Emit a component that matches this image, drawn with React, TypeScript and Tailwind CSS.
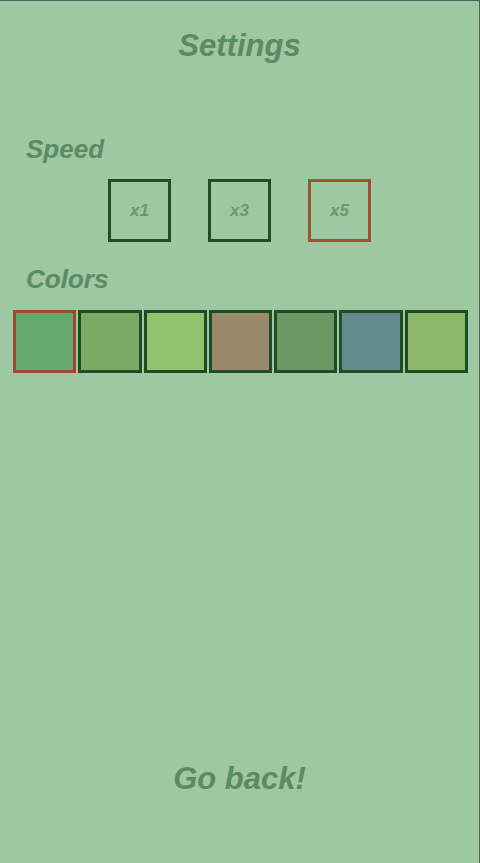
const speeds = [
  { label: "x1", active: false },
  { label: "x3", active: false },
  { label: "x5", active: true },
];

const swatches = [
  { color: "bg-[#66a96f]", active: true },
  { color: "bg-[#7aab66]", active: false },
  { color: "bg-[#8ec46e]", active: false },
  { color: "bg-[#988a6a]", active: false },
  { color: "bg-[#6a9764]", active: false },
  { color: "bg-[#608c8e]", active: false },
  { color: "bg-[#8db86a]", active: false },
];

export default function App() {
  return (
    <div className="min-h-screen w-full bg-[#9dc8a1] border-t border-r border-[#4f6153] flex flex-col font-['Liberation_Sans',Arial,sans-serif] italic font-bold text-[#5b8b61]">
      <h1 className="text-[31px] leading-none text-center mt-[29px]">Settings</h1>

      <h2 className="text-[26px] leading-none pl-[26px] mt-[75px]">Speed</h2>
      <div className="flex gap-[37px] pl-[108px] mt-[17px]">
        {speeds.map((s) => (
          <div
            key={s.label}
            className={
              "w-[63px] h-[63px] border-[3px] flex items-center justify-center text-[17px] text-[#6c9870] " +
              (s.active ? "border-[#9b5233]" : "border-[#1f4d25]")
            }
          >
            {s.label}
          </div>
        ))}
      </div>

      <h2 className="text-[26px] leading-none pl-[26px] mt-[24px]">Colors</h2>
      <div className="flex gap-[2px] pl-[13px] pr-[11px] mt-[18px]">
        {swatches.map((s, i) => (
          <div
            key={i}
            className={
              "flex-1 h-[63px] border-[3px] " +
              s.color +
              " " +
              (s.active ? "border-[#9b4a2c]" : "border-[#1e4d24]")
            }
          />
        ))}
      </div>

      <div className="flex-1" />
      <div className="text-[31px] leading-none text-center pb-[69px]">Go back!</div>
    </div>
  );
}
